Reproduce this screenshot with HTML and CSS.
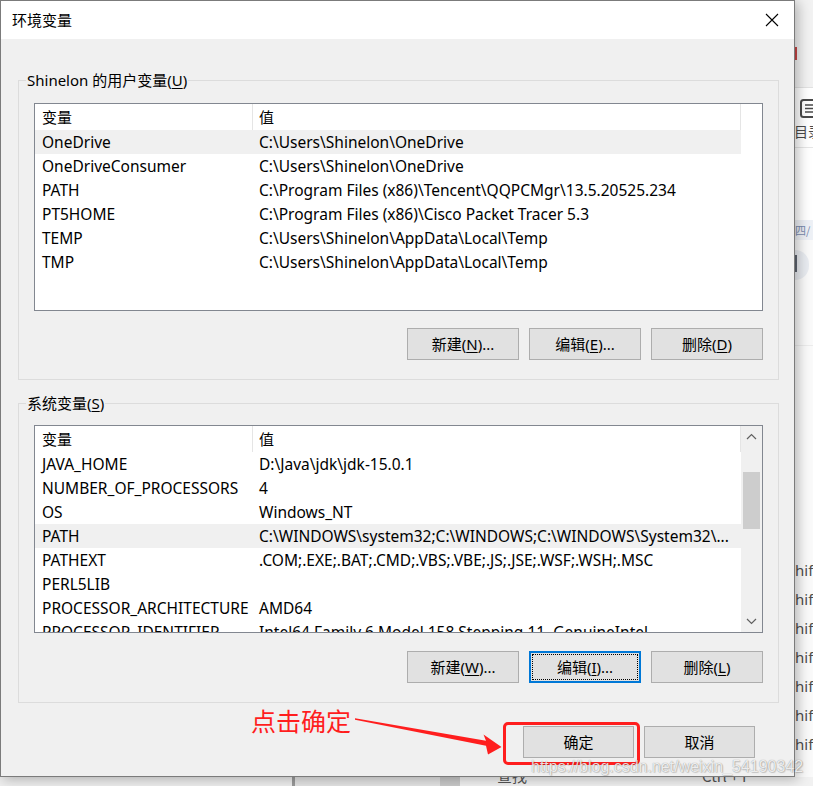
FILE: index.html
```html
<!DOCTYPE html>
<html lang="zh-CN">
<head>
<meta charset="utf-8">
<title>环境变量</title>
<link rel="stylesheet" href="styles.css">
</head>
<body>
<div class="screen">
  <div class="main-row">
    <div class="dialog">
      <div class="titlebar">
        <span class="title">环境变量</span>
        <span class="close"><svg width="14" height="14" viewBox="0 0 14 14"><path d="M1 1L13 13M13 1L1 13" stroke="#000" stroke-width="1.1" fill="none"/></svg></span>
      </div>

      <fieldset class="group group-user">
        <legend>Shinelon 的用户变量(<u>U</u>)</legend>
        <div class="group-body">
          <div class="listview">
            <div class="lv-main">
              <div class="lv-head"><span class="c1">变量</span><span class="c2">值</span></div>
              <div class="lv-row sel"><span class="c1">OneDrive</span><span class="c2">C:\Users\Shinelon\OneDrive</span></div>
              <div class="lv-row"><span class="c1">OneDriveConsumer</span><span class="c2">C:\Users\Shinelon\OneDrive</span></div>
              <div class="lv-row"><span class="c1">PATH</span><span class="c2">C:\Program Files (x86)\Tencent\QQPCMgr\13.5.20525.234</span></div>
              <div class="lv-row"><span class="c1">PT5HOME</span><span class="c2">C:\Program Files (x86)\Cisco Packet Tracer 5.3</span></div>
              <div class="lv-row"><span class="c1">TEMP</span><span class="c2">C:\Users\Shinelon\AppData\Local\Temp</span></div>
              <div class="lv-row"><span class="c1">TMP</span><span class="c2">C:\Users\Shinelon\AppData\Local\Temp</span></div>
            </div>
          </div>
          <div class="btn-row">
            <button class="btn">新建(<u>N</u>)...</button>
            <button class="btn">编辑(<u>E</u>)...</button>
            <button class="btn">删除(<u>D</u>)</button>
          </div>
        </div>
      </fieldset>

      <fieldset class="group group-sys">
        <legend>系统变量(<u>S</u>)</legend>
        <div class="group-body">
          <div class="listview">
            <div class="lv-main">
              <div class="lv-head"><span class="c1">变量</span><span class="c2">值</span></div>
              <div class="lv-row"><span class="c1">JAVA_HOME</span><span class="c2">D:\Java\jdk\jdk-15.0.1</span></div>
              <div class="lv-row"><span class="c1">NUMBER_OF_PROCESSORS</span><span class="c2">4</span></div>
              <div class="lv-row"><span class="c1">OS</span><span class="c2">Windows_NT</span></div>
              <div class="lv-row sel"><span class="c1">PATH</span><span class="c2">C:\WINDOWS\system32;C:\WINDOWS;C:\WINDOWS\System32\...</span></div>
              <div class="lv-row"><span class="c1">PATHEXT</span><span class="c2">.COM;.EXE;.BAT;.CMD;.VBS;.VBE;.JS;.JSE;.WSF;.WSH;.MSC</span></div>
              <div class="lv-row"><span class="c1">PERL5LIB</span><span class="c2"></span></div>
              <div class="lv-row"><span class="c1">PROCESSOR_ARCHITECTURE</span><span class="c2">AMD64</span></div>
              <div class="lv-row"><span class="c1">PROCESSOR_IDENTIFIER</span><span class="c2">Intel64 Family 6 Model 158 Stepping 11, GenuineIntel</span></div>
            </div>
            <div class="lv-scroll">
              <div class="sb-btn"><svg width="11" height="7" viewBox="0 0 11 7"><path d="M1 6L5.5 1.5L10 6" stroke="#606060" stroke-width="1.2" fill="none"/></svg></div>
              <div class="sb-track"><div class="sb-thumb"></div></div>
              <div class="sb-btn"><svg width="11" height="7" viewBox="0 0 11 7"><path d="M1 1L5.5 5.5L10 1" stroke="#606060" stroke-width="1.2" fill="none"/></svg></div>
            </div>
          </div>
          <div class="btn-row btn-row-sys">
            <button class="btn">新建(<u>W</u>)...</button>
            <button class="btn focus">编辑(<u>I</u>)...</button>
            <button class="btn">删除(<u>L</u>)</button>
          </div>
        </div>
      </fieldset>

      <div class="dlg-buttons">
        <button class="btn btn-dlg">确定</button>
        <button class="btn btn-dlg">取消</button>
      </div>
    </div>

    <div class="page-edge">
      <div class="edge-head"><span class="edge-red"></span></div>
      <div class="edge-toc">
        <svg class="toc-icon" width="16" height="19" viewBox="0 0 16 19"><rect x="1" y="1" width="20" height="17" rx="2.5" fill="none" stroke="#4a4a4a" stroke-width="2"/><path d="M5 6H16M5 9.5H16M5 13H13" stroke="#4a4a4a" stroke-width="1.6"/></svg>
        <span class="toc-label">目录</span>
      </div>
      <div class="edge-blank"></div>
      <div class="edge-tag">四/</div>
      <div class="edge-pill"><span></span></div>
      <div class="edge-line"></div>
      <div class="edge-list">
        <div class="hif">hif</div>
        <div class="hif">hif</div>
        <div class="hif">hif</div>
        <div class="hif">hif</div>
        <div class="hif">hif</div>
        <div class="hif">hif</div>
        <div class="hif">hif</div>
      </div>
    </div>
  </div>

  <div class="page-bottom">
    <span class="pb-a"></span>
    <span class="pb-b"></span>
    <span class="pb-c"></span>
    <span class="pb-d"><span class="pb-text">查找</span><span class="pb-text pb-ctrl">Ctrl + F</span></span>
  </div>

  <div class="callout-box"></div>
  <div class="callout-text">点击确定</div>
  <svg class="callout-arrow" width="813" height="786" viewBox="0 0 813 786">
    <polygon points="355,718.2 486,740.8 483.5,734.5 501.5,747 488,754.5 486,745.8 355,719.8" fill="#ff1e1e"/>
  </svg>
  <div class="watermark">https://blog.csdn.net/weixin_54190342</div>
</div>
</body>
</html>
```
FILE: styles.css
```css
* { box-sizing: border-box; }

html, body {
  margin: 0;
  padding: 0;
}

body {
  width: 813px;
  height: 786px;
  overflow: hidden;
  font-family: "Noto Sans", "Noto Sans CJK SC", sans-serif;
  font-size: 15px;
  color: #000;
  background: #f7f7f7;
}

.screen {
  position: relative;
  width: 813px;
  height: 786px;
  overflow: hidden;
}

.main-row {
  display: flex;
  height: 777px;
}

/* ---------- dialog ---------- */
.dialog {
  position: relative;
  z-index: 1;
  flex: none;
  width: 795px;
  height: 777px;
  border: 1px solid #7b7b7b;
  background: #f0f0f0;
  box-shadow: 3px 2px 12px rgba(0, 0, 0, 0.28);
  display: flex;
  flex-direction: column;
}

.titlebar {
  flex: none;
  height: 38px;
  background: #fff;
  display: flex;
  align-items: center;
  justify-content: space-between;
  padding: 0 15px 0 11px;
}

.title {
  font-family: "Noto Sans CJK SC", sans-serif;
  font-size: 15px;
  line-height: 20px;
}

.close {
  display: flex;
  width: 14px;
  height: 14px;
}

.group {
  margin: 31px 15px 0 17px;
  padding: 0;
  border: 1px solid #dcdcdc;
  min-width: 0;
}

.group legend {
  margin-left: 7px;
  padding: 0 1px;
  font-size: 15px;
  line-height: 20px;
}

.group-sys {
  margin-top: 13px;
}

.group-body {
  padding: 13px 15px 19px;
}

.group-sys .group-body {
  padding-top: 12px;
}

u {
  text-underline-offset: 2px;
}

/* ---------- list view ---------- */
.listview {
  height: 208px;
  border: 1px solid #828790;
  background: #fff;
  display: flex;
  overflow: hidden;
}

.lv-main {
  flex: none;
  width: 706px;
  overflow: hidden;
}

.lv-head {
  display: flex;
  height: 26px;
}

.lv-head span {
  line-height: 26px;
  border-right: 1px solid #e5e5e5;
}

.lv-row {
  display: flex;
  height: 24px;
  line-height: 24px;
  font-size: 15.5px;
}

.lv-row.sel {
  background: #f0f0f0;
}

.c1 {
  flex: none;
  width: 218px;
  padding-left: 7px;
  white-space: nowrap;
  overflow: hidden;
}

.c2 {
  flex: none;
  width: 488px;
  padding-left: 6px;
  white-space: nowrap;
  overflow: hidden;
}

.lv-scroll {
  flex: none;
  width: 21px;
  background: #f0f0f0;
  display: flex;
  flex-direction: column;
}

.sb-btn {
  flex: none;
  height: 21px;
  display: flex;
  align-items: center;
  justify-content: center;
}

.sb-track {
  flex: 1;
}

.sb-thumb {
  margin: 25px 2px 0;
  height: 57px;
  background: #cdcdcd;
}

/* ---------- buttons ---------- */
.btn-row {
  display: flex;
  justify-content: flex-end;
  gap: 10px;
  margin-top: 17px;
}

.btn-row-sys {
  margin-top: 18px;
}

.btn {
  width: 112px;
  height: 32px;
  padding: 0;
  background: #e1e1e1;
  border: 1px solid #adadad;
  border-radius: 0;
  font-family: "Noto Sans", "Noto Sans CJK SC", sans-serif;
  font-size: 15px;
  line-height: 30px;
  color: #000;
}

.btn.focus {
  border-color: #0078d7;
  box-shadow: inset 0 0 0 1px #0078d7;
  outline: 1px dotted #000;
  outline-offset: -4px;
}

.dlg-buttons {
  display: flex;
  justify-content: flex-end;
  gap: 10px;
  margin: 23px 39px 0 0;
}

.btn-dlg {
  width: 111px;
}

/* ---------- background page ---------- */
.page-edge {
  flex: none;
  width: 18px;
  display: flex;
  flex-direction: column;
  background: #fafafa;
  overflow: hidden;
}

.edge-head {
  flex: none;
  height: 88px;
  background: #f2f2f2;
  border-bottom: 1px solid #e2e2e2;
  padding-top: 47px;
}

.edge-red {
  display: block;
  width: 2px;
  height: 13px;
  background: #c84545;
}

.edge-toc {
  flex: none;
  height: 60px;
  background: #fff;
  border-bottom: 1px solid #e6e6e6;
  padding: 11px 0 0 5px;
  display: flex;
  flex-direction: column;
}

.toc-icon {
  display: block;
}

.toc-label {
  margin: 5px 0 0 -6px;
  font-family: "Noto Sans CJK SC", sans-serif;
  font-size: 14px;
  line-height: 16px;
  color: #4a4a4a;
  white-space: nowrap;
}

.edge-blank {
  flex: none;
  height: 72px;
  background: #fff;
}

.edge-tag {
  flex: none;
  height: 20px;
  background: #eef1f6;
  font-family: "Noto Sans CJK SC", sans-serif;
  font-size: 11px;
  line-height: 20px;
  color: #7b8cb0;
  white-space: nowrap;
}

.edge-pill {
  flex: none;
  height: 30px;
  margin-top: 10px;
  width: 14px;
  border-radius: 0 15px 15px 0;
  background: #e9ecf1;
  padding-top: 5px;
}

.edge-pill span {
  display: block;
  width: 2px;
  height: 17px;
  background: #5d6470;
}

.edge-line {
  flex: none;
  height: 1px;
  margin-top: 65px;
  background: #ececec;
}

.edge-list {
  margin-top: 210px;
}

.hif {
  height: 29px;
  line-height: 29px;
  font-size: 15px;
  color: #4d4d4d;
  white-space: nowrap;
}

.page-bottom {
  height: 9px;
  display: flex;
  background: #ededed;
  overflow: hidden;
}

.pb-a {
  width: 295px;
  background: #eeeeee;
  border-right: 3px solid #9a9a9a;
}

.pb-b {
  width: 145px;
  background: #e3e3e3;
}

.pb-c {
  width: 20px;
  background: #c9c9c9;
}

.pb-d {
  flex: 1;
  background: #f1f1f1;
}

.pb-text {
  display: inline-block;
  margin: -10px 0 0 37px;
  font-family: "Noto Sans CJK SC", sans-serif;
  font-size: 15px;
  line-height: 18px;
  color: #555;
  vertical-align: top;
}

.pb-ctrl {
  margin-left: 175px;
}

/* ---------- annotation overlays ---------- */
.callout-box {
  position: absolute;
  left: 503px;
  top: 722px;
  width: 137px;
  height: 43px;
  border: 3px solid #ff1e1e;
  border-radius: 5px;
  z-index: 5;
}

.callout-text {
  position: absolute;
  left: 251px;
  top: 705px;
  font-family: "Noto Sans CJK SC", sans-serif;
  font-size: 25px;
  line-height: 30px;
  color: #ff1e1e;
  z-index: 5;
}

.callout-arrow {
  position: absolute;
  left: 0;
  top: 0;
  z-index: 5;
  pointer-events: none;
}

.watermark {
  position: absolute;
  left: 531px;
  top: 757px;
  font-family: "Liberation Sans", Arial, sans-serif;
  font-size: 16px;
  line-height: 20px;
  color: rgba(255, 255, 255, 0.85);
  text-shadow: 0 0 1px rgba(0, 0, 0, 0.45), 1px 1px 1px rgba(0, 0, 0, 0.15);
  white-space: nowrap;
  z-index: 6;
}
```
